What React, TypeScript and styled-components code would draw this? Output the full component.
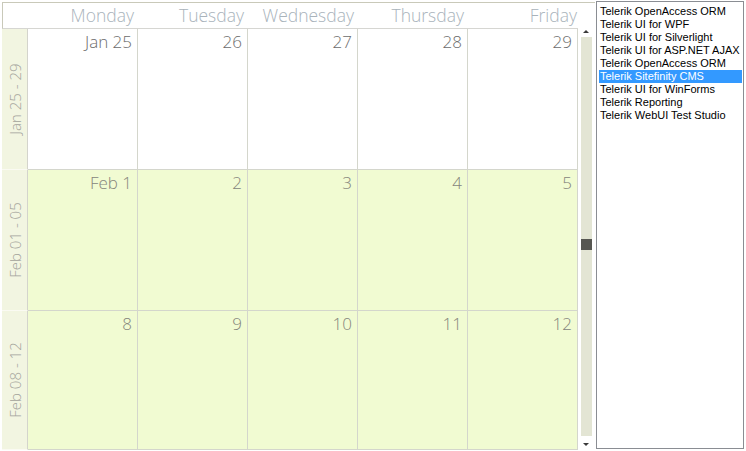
import styled, { createGlobalStyle } from 'styled-components';

const GlobalStyle = createGlobalStyle`
  html, body {
    margin: 0;
    padding: 0;
    background: #ffffff;
  }
  * {
    box-sizing: border-box;
  }
`;

const Page = styled.div`
  display: flex;
  align-items: flex-start;
  width: 746px;
  height: 451px;
  overflow: hidden;
`;

const Scheduler = styled.div`
  margin: 2px 0 0 2px;
  width: 593px;
  border-top: 1px solid #c9c9b9;
  display: flex;
  flex-direction: column;
`;

const HeaderRow = styled.div`
  display: flex;
`;

const HeaderGrid = styled.div`
  display: grid;
  grid-template-columns: 25px repeat(5, 110px);
  width: 576px;
  height: 26px;
  border-left: 1px solid #c9c9b9;
  border-bottom: 1px solid #d6d6d2;
`;

const DayName = styled.div<{ $pad: number }>`
  font-family: 'Open Sans', 'Noto Sans', sans-serif;
  font-weight: 300;
  font-size: 17.5px;
  line-height: 24px;
  color: #a9b3bb;
  text-align: right;
  padding-right: ${({ $pad }) => $pad}px;
  white-space: nowrap;
`;

const Body = styled.div`
  display: flex;
  height: 421px;
`;

const MonthGrid = styled.div`
  display: grid;
  grid-template-columns: 26px repeat(5, 110px);
  grid-template-rows: 141px 141px 139px;
  width: 576px;
`;

const WeekLabel = styled.div`
  background: #f2f5e1;
  border-right: 1px solid #d4d4cc;
  border-bottom: 1px solid #fafaf2;
  display: flex;
  align-items: center;
  justify-content: center;
  overflow: hidden;
`;

const WeekText = styled.span`
  display: block;
  transform: rotate(-90deg);
  white-space: nowrap;
  font-family: 'Open Sans', 'Noto Sans', sans-serif;
  font-weight: 300;
  font-size: 15px;
  color: #a3a39b;
`;

const DayCell = styled.div<{ $current: boolean }>`
  background: ${({ $current }) => ($current ? '#f1fbd2' : '#ffffff')};
  border-right: 1px solid #d4d6cc;
  border-bottom: 1px solid #d4d6cc;
  text-align: right;
  padding: 2px 5px 0 0;
  font-family: 'Open Sans', 'Noto Sans', sans-serif;
  font-weight: 300;
  font-size: 17px;
  line-height: 22px;
  color: ${({ $current }) => ($current ? '#85857c' : '#6c6c6c')};
`;

const ScrollBar = styled.div`
  width: 17px;
  display: flex;
  flex-direction: column;
  align-items: flex-start;
`;

const ArrowBox = styled.div<{ $h: number; $top: number }>`
  height: ${({ $h }) => $h}px;
  padding: ${({ $top }) => $top}px 0 0 5px;
`;

const ArrowUp = styled.div`
  width: 0;
  height: 0;
  border-left: 3px solid transparent;
  border-right: 3px solid transparent;
  border-bottom: 3px solid #3a3a3a;
`;

const ArrowDown = styled.div`
  width: 0;
  height: 0;
  border-left: 3px solid transparent;
  border-right: 3px solid transparent;
  border-top: 3px solid #3a3a3a;
`;

const Track = styled.div`
  position: relative;
  flex: 1;
  width: 11px;
  margin-left: 3px;
  background: #e3e5d4;
`;

const Thumb = styled.div`
  position: absolute;
  left: 0;
  top: 202px;
  width: 11px;
  height: 11px;
  background: #575752;
`;

const ListBox = styled.div`
  margin: 1px 0 0 1px;
  width: 148px;
  height: 448px;
  border: 1px solid #8a8d93;
  background: #ffffff;
  padding: 3px 1px 0 2px;
`;

const ListItem = styled.div<{ $selected?: boolean }>`
  font-family: 'Liberation Sans', Arial, sans-serif;
  font-size: 11px;
  line-height: 13px;
  height: 13px;
  padding-left: 1px;
  white-space: nowrap;
  color: ${({ $selected }) => ($selected ? '#ffffff' : '#000000')};
  background: ${({ $selected }) => ($selected ? '#3399ff' : 'transparent')};
`;

const days = ['Monday', 'Tuesday', 'Wednesday', 'Thursday', 'Friday'];

const weeks = [
  { label: 'Jan 25 - 29', dates: ['Jan 25', '26', '27', '28', '29'], current: false },
  { label: 'Feb 01 - 05', dates: ['Feb 1', '2', '3', '4', '5'], current: true },
  { label: 'Feb 08 - 12', dates: ['8', '9', '10', '11', '12'], current: true },
];

const products = [
  'Telerik OpenAccess ORM',
  'Telerik UI for WPF',
  'Telerik UI for Silverlight',
  'Telerik UI for ASP.NET AJAX',
  'Telerik OpenAccess ORM',
  'Telerik Sitefinity CMS',
  'Telerik UI for WinForms',
  'Telerik Reporting',
  'Telerik WebUI Test Studio',
];

const App = () => {
  return (
    <>
      <GlobalStyle />
      <Page>
        <Scheduler>
          <HeaderRow>
            <HeaderGrid>
              <div />
              {days.map((d, i) => (
                <DayName key={d} $pad={i === days.length - 1 ? 1 : 4}>
                  {d}
                </DayName>
              ))}
            </HeaderGrid>
          </HeaderRow>
          <Body>
            <MonthGrid>
              {weeks.map((w) => [
                <WeekLabel key={w.label}>
                  <WeekText>{w.label}</WeekText>
                </WeekLabel>,
                ...w.dates.map((date) => (
                  <DayCell key={w.label + date} $current={w.current}>
                    {date}
                  </DayCell>
                )),
              ])}
            </MonthGrid>
            <ScrollBar>
              <ArrowBox $h={8} $top={1}>
                <ArrowUp />
              </ArrowBox>
              <Track>
                <Thumb />
              </Track>
              <ArrowBox $h={14} $top={7}>
                <ArrowDown />
              </ArrowBox>
            </ScrollBar>
          </Body>
        </Scheduler>
        <ListBox>
          {products.map((p, i) => (
            <ListItem key={i} $selected={i === 5}>
              {p}
            </ListItem>
          ))}
        </ListBox>
      </Page>
    </>
  );
};

export default App;
